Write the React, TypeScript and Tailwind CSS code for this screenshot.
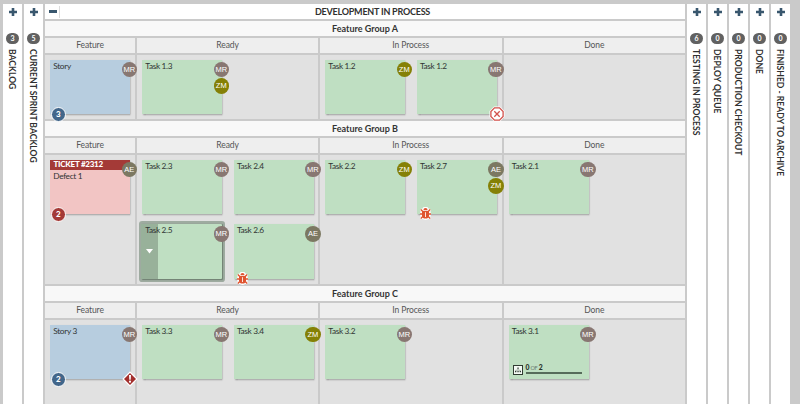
import React from "react";

type Person = "MR" | "ZM" | "AE";
type Tone = "green" | "blue" | "red";

interface CardData {
  title: string;
  people: Person[];
  tone?: Tone;
  banner?: string;
  count?: number;
  corner?: "blocked" | "alert";
  bug?: boolean;
  selected?: boolean;
  progress?: boolean;
}

const personColor: Record<Person, string> = {
  MR: "bg-[#887772]",
  ZM: "bg-[#858006]",
  AE: "bg-[#7c7862]",
};

const toneColor: Record<Tone, string> = {
  green: "bg-[#bfdfc2]",
  blue: "bg-[#b7cddf]",
  red: "bg-[#f2c5c4]",
};

function Plus() {
  return (
    <svg width="8" height="8" viewBox="0 0 8 8" className="shrink-0">
      <path d="M2.7 0h2.6v2.7H8v2.6H5.3V8H2.7V5.3H0V2.7h2.7z" fill="#39576e" />
    </svg>
  );
}

function Lane({ name, count }: { name: string; count: number }) {
  return (
    <section className="flex h-full w-[19px] shrink-0 flex-col items-center bg-white pt-[4px]">
      <Plus />
      <div className="mt-[17px] flex h-[11px] w-[13px] shrink-0 items-center justify-center rounded-full bg-[#616161]">
        <span className="text-[7px] leading-none font-bold text-white">{count}</span>
      </div>
      <h2 className="mt-[5px] mr-[2px] text-[8.6px] leading-[11px] font-bold whitespace-nowrap text-[#303030] [writing-mode:vertical-rl]">
        {name}
      </h2>
    </section>
  );
}

function Bug() {
  return (
    <svg width="13" height="13" viewBox="0 0 13 13" className="absolute bottom-[-6px] left-[2px]">
      <g stroke="#fff" strokeWidth="2.8" strokeLinejoin="round" fill="#fff">
        <path d="M4.4 3.200a2.100 2.100 0 0 1 4.200 0z" />
        <path d="M1.800 2.500l2 2M11.200 2.500l-2 2M1 7h2.400M9.600 7H12M1.800 11.500l2-2M11.200 11.500l-2-2" />
        <path d="M3 4h7v4.800a3.500 2.800 0 0 1-7 0z" />
      </g>
      <path
        d="M1.800 2.500l2 2M11.200 2.500l-2 2M1 7h2.400M9.600 7H12M1.800 11.500l2-2M11.200 11.500l-2-2"
        stroke="#df5430"
        strokeWidth="1.400"
        fill="none"
      />
      <path d="M4.400 3.200a2.100 2.100 0 0 1 4.200 0z" fill="#df5430" />
      <path d="M3 4h7v4.800a3.500 2.800 0 0 1-7 0z" fill="#df5430" />
      <path d="M6.500 5.200v4.800" stroke="#fbe4dc" strokeWidth="1" />
    </svg>
  );
}

function Blocked() {
  return (
    <svg width="16" height="16" viewBox="0 0 16 16" className="absolute right-[-8px] bottom-[-8px]">
      <path d="M5 .5h6L15.500 5v6L11 15.500H5L.5 11V5z" fill="#fff" />
      <path d="M5.500 1.900h5L14.100 5.500v5L10.500 14.100h-5L1.900 10.500v-5z" fill="#fff" stroke="#d2524c" strokeWidth="1.300" />
      <path d="M5.300 5.300l5.400 5.400M10.700 5.300l-5.400 5.400" stroke="#d2524c" strokeWidth="1.300" />
    </svg>
  );
}

function Alert() {
  return (
    <svg width="16" height="16" viewBox="0 0 16 16" className="absolute right-[-8px] bottom-[-8px]">
      <path d="M8 .3L15.700 8 8 15.700.3 8z" fill="#fff" />
      <path d="M8 2L14 8l-6 6-6-6z" fill="#a32f2d" />
      <path d="M7 4h2l-.3 4.800H7.300z" fill="#fff" />
      <circle cx="8" cy="10.700" r="1.100" fill="#fff" />
    </svg>
  );
}

function Progress() {
  return (
    <div className="mt-auto mb-[4.500px] ml-[4px] flex items-end gap-[3px]">
      <svg width="10" height="10" viewBox="0 0 10 10" className="shrink-0">
        <rect x=".5" y=".5" width="9" height="9" fill="#f4faf4" stroke="#303b32" />
        <path d="M5 3v2M2.700 7V5.200h4.600V7" stroke="#7b877d" strokeWidth=".6" fill="none" />
        <path d="M4.400 2.400h1.300v1.300H4.400zM2 6h1.300v1.300H2zM4.400 6h1.300v1.300H4.400zM6.700 6H8v1.300H6.700z" fill="#303b32" />
      </svg>
      <div className="mb-[1px] flex w-[56px] flex-col">
        <div className="text-[6.800px] leading-[7px] font-black tracking-[-0.300px] text-[#263028]">
          0 <span className="text-[5.500px] font-normal text-[#6b7a6e]">OF</span> 2
        </div>
        <div className="h-[2px] bg-[#566b5a]" />
      </div>
    </div>
  );
}

function Card({ card }: { card: CardData }) {
  const tone = card.tone ?? "green";
  return (
    <article
      className={`relative flex h-[54.500px] w-[80px] shrink-0 flex-col ${toneColor[tone]} ${
        card.selected
          ? "rounded-[1px] shadow-[0.500px_0.500px_1px_#6f8072,0_0_0_3px_#9eaba0]"
          : "shadow-[0.500px_1px_1.500px_rgba(0,0,0,0.35)]"
      }`}
    >
      {card.selected && (
        <div className="absolute inset-y-0 left-[-1px] flex w-[16.500px] items-center justify-center bg-[#98b19a]">
          <svg width="7" height="5" viewBox="0 0 7 5">
            <path d="M0 0h7L3.500 4.500z" fill="#fff" />
          </svg>
        </div>
      )}
      {card.banner && (
        <div className="h-[10px] bg-[#a43a37] pl-[3.500px] text-[8px] leading-[9.500px] font-black tracking-[-0.250px] whitespace-nowrap text-white">
          {card.banner}
        </div>
      )}
      <h4 className="relative pt-[1px] pl-[3.300px] text-[8.300px] leading-[10px] tracking-[-0.350px] text-[#303433]">
        {card.title}
      </h4>
      {card.progress && <Progress />}
      <div className="absolute top-[2px] left-[71.500px] flex flex-col gap-[1px]">
        {card.people.map((p) => (
          <span
            key={p}
            className={`flex size-[15.500px] items-center justify-center rounded-full font-['Liberation_Sans',Arial,sans-serif] text-[7.500px] leading-none text-white ${personColor[p]}`}
          >
            {p}
          </span>
        ))}
      </div>
      {card.count !== undefined && (
        <span
          className={`absolute bottom-[-8px] left-[0.500px] flex size-[15.500px] items-center justify-center rounded-full border border-white text-[8px] leading-none font-black text-white ${
            tone === "red" ? "bg-[#a43a37]" : "bg-[#42668a]"
          }`}
        >
          {card.count}
        </span>
      )}
      {card.bug && <Bug />}
      {card.corner === "blocked" && <Blocked />}
      {card.corner === "alert" && <Alert />}
    </article>
  );
}

const columns = ["Feature", "Ready", "In Process", "Done"];
const columnGrid = "grid grid-cols-[90px_181px_181.500px_181.500px] gap-x-[2px]";

interface Group {
  name: string;
  height: string;
  cells: CardData[][];
}

const groups: Group[] = [
  {
    name: "Feature Group A",
    height: "h-[64.500px]",
    cells: [
      [{ title: "Story", people: ["MR"], tone: "blue", count: 3 }],
      [{ title: "Task 1.3", people: ["MR", "ZM"] }],
      [
        { title: "Task 1.2", people: ["ZM"] },
        { title: "Task 1.2", people: ["MR"], corner: "blocked" },
      ],
      [],
    ],
  },
  {
    name: "Feature Group B",
    height: "h-[129.500px]",
    cells: [
      [{ title: "Defect 1", people: ["AE"], tone: "red", banner: "TICKET #2312", count: 2 }],
      [
        { title: "Task 2.3", people: ["MR"] },
        { title: "Task 2.4", people: ["MR"] },
        { title: "Task 2.5", people: ["MR"], selected: true },
        { title: "Task 2.6", people: ["AE"], bug: true },
      ],
      [
        { title: "Task 2.2", people: ["ZM"] },
        { title: "Task 2.7", people: ["AE", "ZM"], bug: true },
      ],
      [{ title: "Task 2.1", people: ["MR"] }],
    ],
  },
  {
    name: "Feature Group C",
    height: "h-[85px]",
    cells: [
      [{ title: "Story 3", people: ["MR"], tone: "blue", count: 2, corner: "alert" }],
      [
        { title: "Task 3.3", people: ["MR"] },
        { title: "Task 3.4", people: ["ZM"] },
      ],
      [{ title: "Task 3.2", people: ["MR"] }],
      [{ title: "Task 3.1", people: ["MR"], progress: true }],
    ],
  },
];

function GroupSection({ group }: { group: Group }) {
  return (
    <section className="flex flex-col gap-[2px]">
      <h3 className="h-[15px] bg-[#f8f8f8] text-center text-[9px] leading-[15px] font-bold text-[#333]">{group.name}</h3>
      <div className={columnGrid}>
        {columns.map((c) => (
          <div
            key={c}
            className="h-[14.500px] bg-[#eee] text-center text-[8.500px] leading-[14.500px] tracking-[-0.100px] text-[#555]"
          >
            {c}
          </div>
        ))}
      </div>
      <div className={`${columnGrid} ${group.height}`}>
        {group.cells.map((cards, i) => (
          <div key={i} className="flex flex-wrap content-start gap-x-[11.700px] gap-y-[10px] bg-[#e1e1e1] pt-[5px] pl-[5px]">
            {cards.map((card, j) => (
              <Card key={j} card={card} />
            ))}
          </div>
        ))}
      </div>
    </section>
  );
}

export default function App() {
  return (
    <div className="flex h-[404px] w-[800px] gap-[2px] overflow-hidden bg-[#cacaca] pt-[4px] pl-[3px] font-[Lato,sans-serif]">
      <Lane name="BACKLOG" count={3} />
      <Lane name="CURRENT SPRINT BACKLOG" count={5} />
      <main className="flex w-[640px] shrink-0 flex-col gap-[2px]">
        <header className="flex h-[15px] shrink-0 items-center bg-white">
          <div className="flex h-[12px] w-[15px] shrink-0 items-center border-r border-[#ddd] pl-[4px]">
            <div className="h-[2.500px] w-[8px] bg-[#39576e]" />
          </div>
          <h1 className="flex-1 text-center text-[9px] leading-[15px] font-bold tracking-[-0.220px] text-[#303030]">
            DEVELOPMENT IN PROCESS
          </h1>
        </header>
        {groups.map((g) => (
          <GroupSection key={g.name} group={g} />
        ))}
      </main>
      <Lane name="TESTING IN PROCESS" count={6} />
      <Lane name="DEPLOY QUEUE" count={0} />
      <Lane name="PRODUCTION CHECKOUT" count={0} />
      <Lane name="DONE" count={0} />
      <Lane name="FINISHED - READY TO ARCHIVE" count={0} />
    </div>
  );
}
